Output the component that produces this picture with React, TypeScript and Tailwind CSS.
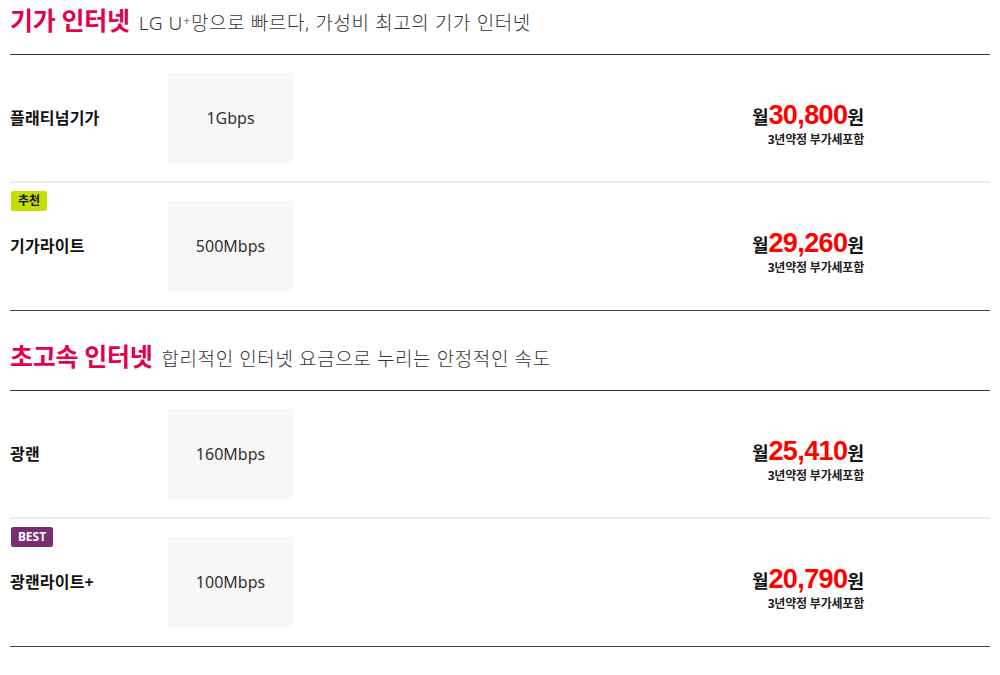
import React from 'react';

const font = { fontFamily: '"Noto Sans", "Noto Sans CJK KR", sans-serif' };

type Plan = {
  name: string;
  speed: string;
  price: string;
  badge?: 'rec' | 'best';
};

const sections: { title: string; desc: React.ReactNode; plans: Plan[] }[] = [
  {
    title: '기가 인터넷',
    desc: (
      <>
        LG U<sup className="text-[13px] relative top-[-4px]">+</sup>망으로 빠르다, 가성비 최고의 기가 인터넷
      </>
    ),
    plans: [
      { name: '플래티넘기가', speed: '1Gbps', price: '30,800' },
      { name: '기가라이트', speed: '500Mbps', price: '29,260', badge: 'rec' },
    ],
  },
  {
    title: '초고속 인터넷',
    desc: '합리적인 인터넷 요금으로 누리는 안정적인 속도',
    plans: [
      { name: '광랜', speed: '160Mbps', price: '25,410' },
      { name: '광랜라이트+', speed: '100Mbps', price: '20,790', badge: 'best' },
    ],
  },
];

function Badge({ type }: { type: 'rec' | 'best' }) {
  if (type === 'rec') {
    return (
      <span className="absolute left-[1px] top-[8px] h-[20px] w-[36px] rounded-[2px] bg-[#c6dd00] text-[12px] font-bold leading-[20px] text-center text-[#111]">
        추천
      </span>
    );
  }
  return (
    <span className="absolute left-[1px] top-[8px] h-[20px] w-[42px] rounded-[2px] bg-[#7a2e72] text-[12px] font-bold leading-[20px] text-center text-white">
      BEST
    </span>
  );
}

function PlanRow({ plan, last }: { plan: Plan; last: boolean }) {
  return (
    <div
      className={
        'relative flex items-center pt-[18px] ' +
        (last ? 'pb-[19px] border-b border-[#444]' : 'pb-[18px] border-b-2 border-[#ececec]')
      }
    >
      {plan.badge && <Badge type={plan.badge} />}
      <div className="w-[158px] text-[16px] font-bold text-[#111] tracking-[0.2px]">{plan.name}</div>
      <div className="flex h-[90px] w-[125px] items-center justify-center bg-[#f7f7f7] text-[16px] text-[#333]">
        {plan.speed}
      </div>
      <div className="flex flex-1 justify-end pr-[126px] pt-[12px]">
        <div className="flex flex-col items-end">
          <div className="flex items-baseline leading-none">
            <span className="text-[18px] font-bold text-[#111]">월</span>
            <span
              className="text-[27px] font-bold text-[#ff0000] tracking-[-0.6px]"
              style={{ fontFamily: '"Liberation Sans", Arial, sans-serif' }}
            >
              {plan.price}
            </span>
            <span className="text-[18px] font-bold text-[#111]">원</span>
          </div>
          <div className="mt-[5px] text-[12px] font-bold leading-none text-[#222] tracking-[-0.2px]">
            3년약정 부가세포함
          </div>
        </div>
      </div>
    </div>
  );
}

export default function App() {
  return (
    <div className="min-h-screen bg-white px-[10px]" style={font}>
      {sections.map((s, i) => (
        <section key={s.title} className={i > 0 ? 'mt-[25px]' : ''}>
          <div className="flex h-[55px] items-baseline gap-[9px] border-b border-[#333] pt-[3px]">
            <h2 className="text-[25px] font-semibold leading-[34px] tracking-[-0.3px] text-[#e4004b]">{s.title}</h2>
            <p className="text-[19px] font-light leading-[34px] text-[#333] tracking-[0.6px]">{s.desc}</p>
          </div>
          {s.plans.map((p, j) => (
            <PlanRow key={p.name} plan={p} last={j === s.plans.length - 1} />
          ))}
        </section>
      ))}
    </div>
  );
}
